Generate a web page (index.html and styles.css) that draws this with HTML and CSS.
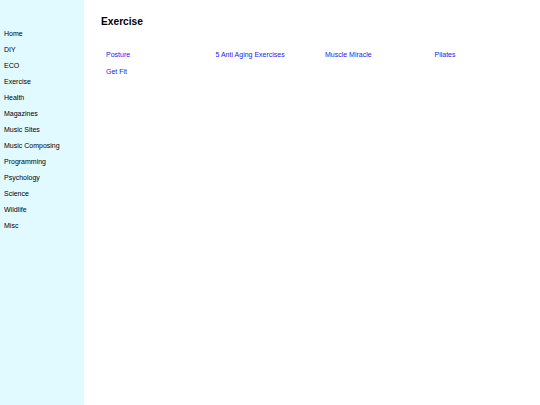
FILE: index.html
```html
<!DOCTYPE html>
<html>
<head>
<meta charset="utf-8">
<link rel="stylesheet" href="styles.css">
</head>
<body>
<div class="page">
  <nav class="sidebar">
    <a href="#">Home</a>
    <a href="#">DIY</a>
    <a href="#">ECO</a>
    <a href="#">Exercise</a>
    <a href="#">Health</a>
    <a href="#">Magazines</a>
    <a href="#">Music Sites</a>
    <a href="#">Music Composing</a>
    <a href="#">Programming</a>
    <a href="#">Psychology</a>
    <a href="#">Science</a>
    <a href="#">Wildlife</a>
    <a href="#">Misc</a>
  </nav>
  <main class="content">
    <h1 class="title">Exercise</h1>
    <div class="links">
      <a href="#">Posture</a>
      <a href="#">5 Anti Aging Exercises</a>
      <a href="#">Muscle Miracle</a>
      <a href="#">Pilates</a>
      <a href="#">Get Fit</a>
    </div>
  </main>
</div>
</body>
</html>
```
FILE: styles.css
```css
html, body {
  margin: 0;
  padding: 0;
  height: 100%;
}
body {
  font-family: "Liberation Sans", Arial, sans-serif;
  background: #ffffff;
}
.page {
  display: flex;
  min-height: 100%;
}
.sidebar {
  width: 84px;
  flex: none;
  background: #e0faff;
  display: flex;
  flex-direction: column;
  padding-top: 26px;
  padding-left: 4px;
  box-sizing: border-box;
}
.sidebar a {
  color: #000000;
  text-decoration: none;
  font-size: 7px;
  line-height: 16px;
  white-space: nowrap;
}
.content {
  flex: 1;
  padding-left: 17px;
  padding-top: 15px;
}
.title {
  margin: 0;
  font-size: 10.2px;
  font-weight: bold;
  color: #000000;
  line-height: 14px;
}
.links {
  margin-top: 18px;
  padding-left: 5px;
  display: grid;
  grid-template-columns: repeat(4, 109.5px);
  grid-auto-rows: 16.5px;
}
.links a {
  color: #1a1aee;
  text-decoration: none;
  font-size: 7px;
  line-height: 16.5px;
  white-space: nowrap;
}
```
